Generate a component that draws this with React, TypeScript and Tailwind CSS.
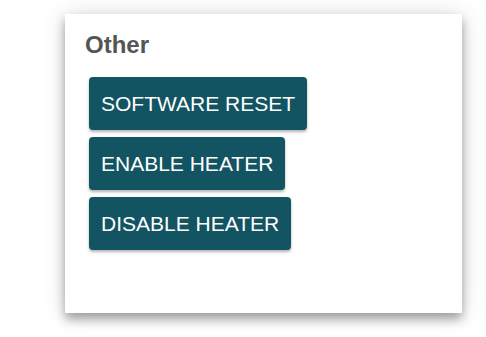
export default function App() {
  const buttons = ["SOFTWARE RESET", "ENABLE HEATER", "DISABLE HEATER"];
  return (
    <div className="w-[486px] h-[337px] bg-white overflow-hidden" style={{ fontFamily: '"Liberation Sans", Arial, sans-serif' }}>
      <div className="ml-[65px] mt-[14px] w-[397px] h-[299px] bg-white shadow-[0_6px_10px_rgba(0,0,0,0.35),0_0_24px_rgba(0,0,0,0.12)] px-5 pt-[17px]">
        <h2 className="text-[24px] leading-[28px] font-bold text-[#555555]">Other</h2>
        <div className="mt-[18px] ml-1 flex flex-col items-start gap-[7px]">
          {buttons.map((b) => (
            <button
              key={b}
              className="h-[53px] px-3 rounded-[4px] bg-[#125462] text-white text-[21px] leading-none shadow-[0_2px_3px_rgba(0,0,0,0.3)]"
            >
              {b}
            </button>
          ))}
        </div>
      </div>
    </div>
  );
}
